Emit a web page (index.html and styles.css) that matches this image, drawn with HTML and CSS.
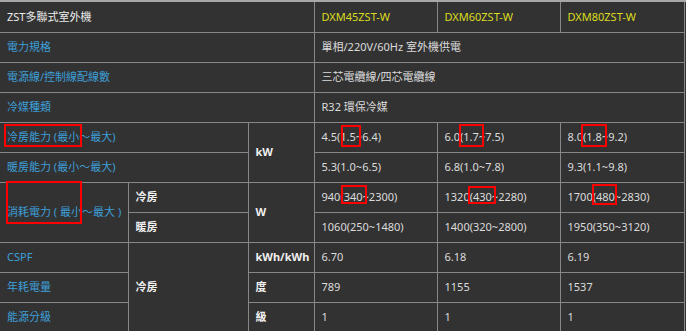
FILE: index.html
```html
<!DOCTYPE html>
<html lang="zh-Hant">
<head>
<meta charset="utf-8">
<title>ZST多聯式室外機 規格</title>
<link rel="stylesheet" href="styles.css">
</head>
<body>
<div class="sheet">
  <table class="spec">
    <colgroup>
      <col class="c1"><col class="c2"><col class="c3"><col class="c4"><col class="c5"><col class="c6">
    </colgroup>
    <tr>
      <td colspan="3" class="title">ZST多聯式室外機</td>
      <td class="model">DXM45ZST-W</td>
      <td class="model">DXM60ZST-W</td>
      <td class="model">DXM80ZST-W</td>
    </tr>
    <tr>
      <td colspan="3" class="label">電力規格</td>
      <td colspan="3" class="val">單相/220V/60Hz 室外機供電</td>
    </tr>
    <tr>
      <td colspan="3" class="label">電源線/控制線配線數</td>
      <td colspan="3" class="val">三芯電纜線/四芯電纜線</td>
    </tr>
    <tr>
      <td colspan="3" class="label">冷媒種類</td>
      <td colspan="3" class="val">R32 環保冷媒</td>
    </tr>
    <tr>
      <td colspan="2" class="label">冷房能力 (最小～最大)</td>
      <td rowspan="2" class="unit">kW</td>
      <td class="val">4.5(1.5~6.4)</td>
      <td class="val">6.0(1.7~7.5)</td>
      <td class="val">8.0(1.8~9.2)</td>
    </tr>
    <tr>
      <td colspan="2" class="label">暖房能力 (最小～最大)</td>
      <td class="val">5.3(1.0~6.5)</td>
      <td class="val">6.8(1.0~7.8)</td>
      <td class="val">9.3(1.1~9.8)</td>
    </tr>
    <tr>
      <td rowspan="2" class="label">消耗電力 ( 最小～最大 )</td>
      <td class="sub">冷房</td>
      <td rowspan="2" class="unit">W</td>
      <td class="val">940(340~2300)</td>
      <td class="val">1320(430~2280)</td>
      <td class="val">1700(480~2830)</td>
    </tr>
    <tr>
      <td class="sub">暖房</td>
      <td class="val">1060(250~1480)</td>
      <td class="val">1400(320~2800)</td>
      <td class="val">1950(350~3120)</td>
    </tr>
    <tr>
      <td class="label">CSPF</td>
      <td rowspan="3" class="sub">冷房</td>
      <td class="unit">kWh/kWh</td>
      <td class="val">6.70</td>
      <td class="val">6.18</td>
      <td class="val">6.19</td>
    </tr>
    <tr>
      <td class="label">年耗電量</td>
      <td class="unit">度</td>
      <td class="val">789</td>
      <td class="val">1155</td>
      <td class="val">1537</td>
    </tr>
    <tr>
      <td class="label">能源分級</td>
      <td class="unit">級</td>
      <td class="val">1</td>
      <td class="val">1</td>
      <td class="val">1</td>
    </tr>
  </table>

  <span class="mark m-cool"></span>
  <span class="mark m-power"></span>
  <span class="mark m-15"></span>
  <span class="mark m-17"></span>
  <span class="mark m-18"></span>
  <span class="mark m-340"></span>
  <span class="mark m-430"></span>
  <span class="mark m-480"></span>
</div>
</body>
</html>
```

FILE: styles.css
```css
html, body {
  margin: 0;
  padding: 0;
  background: #ffffff;
}

.sheet {
  position: relative;
  width: 686px;
  height: 331px;
  background: #323232;
  overflow: hidden;
  border-top: 2px solid #a8a8a8;
  box-sizing: border-box;
}

.spec {
  border-collapse: collapse;
  table-layout: fixed;
  width: 684px;
  font-family: "Noto Sans", "Noto Sans CJK TC", sans-serif;
  font-size: 11px;
  color: #dedede;
}

.c1 { width: 128px; }
.c2 { width: 120px; }
.c3 { width: 66px; }
.c4 { width: 123px; }
.c5 { width: 123px; }
.c6 { width: 124px; }

.spec tr {
  height: 30px;
}

.spec td {
  border: 1px solid #878787;
  padding: 0 7px;
  vertical-align: middle;
  white-space: nowrap;
  line-height: 14px;
}

.spec tr:first-child td {
  border-top: none;
}

.spec tr td:first-child {
  border-left: none;
}

.title {
  color: #ececec;
}

.model {
  color: #dcdc1e;
}

.label {
  color: #3d9fd8;
}

.sub,
.unit {
  color: #f0f0f0;
  font-weight: 700;
}

.sub {
  padding-left: 8px;
}

.val {
  color: #dcdcdc;
}

.mark {
  position: absolute;
  border: 2px solid #ff0000;
  box-sizing: border-box;
}

.m-cool  { left: 4px;   top: 122px; width: 78px; height: 23px; }
.m-power { left: 6px;   top: 179px; width: 76px; height: 43px; }
.m-15    { left: 341px; top: 123px; width: 20px; height: 22px; }
.m-17    { left: 459px; top: 122px; width: 25px; height: 23px; }
.m-18    { left: 581px; top: 122px; width: 26px; height: 23px; }
.m-340   { left: 341px; top: 183px; width: 26px; height: 19px; }
.m-430   { left: 468px; top: 184px; width: 28px; height: 18px; }
.m-480   { left: 592px; top: 182px; width: 25px; height: 21px; }
```
